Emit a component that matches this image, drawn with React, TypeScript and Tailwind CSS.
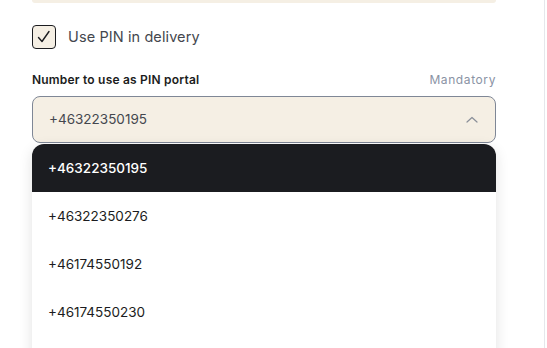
import React from 'react';

const numbers = ['+46322350195', '+46322350276', '+46174550192', '+46174550230'];

export default function App() {
  return (
    <div className="w-[547px] h-[348px] overflow-hidden bg-white flex" style={{ fontFamily: 'Inter, "Noto Sans", sans-serif' }}>
      <div className="w-[545px] shrink-0 border-r border-gray-200 pl-8 pr-12">
        {/* previous field bottom edge */}
        <div className="h-[3px] bg-[#f5efe4] rounded-b-lg" />

        <label className="flex items-center gap-3 mt-[22px]">
          <span className="w-6 h-6 rounded-[4px] border border-[#1b1c20] bg-[#f5efe4] flex items-center justify-center">
            <svg width="16" height="16" viewBox="0 0 16 16" fill="none">
              <path d="M2.5 8.5 L6 12.5 L13 2.5" stroke="#1b1c20" strokeWidth="1.4" strokeLinecap="round" strokeLinejoin="round" />
            </svg>
          </span>
          <span className="text-[14.5px] text-[#44474e] tracking-[0.1px]">Use PIN in delivery</span>
        </label>

        <div className="flex justify-between items-end mt-[22px]">
          <span className="text-[12px] font-semibold text-[#1b1c20] tracking-[0.2px]">Number to use as PIN portal</span>
          <span className="text-[12px] text-[#8a93a4] tracking-[0.6px]">Mandatory</span>
        </div>

        <div className="mt-[7px] h-[47px] rounded-lg border border-[#7f8796] bg-[#f5efe4] flex items-center justify-between pl-4 pr-4">
          <span className="text-[13.5px] text-[#44474e]">+46322350195</span>
          <svg width="14" height="10" viewBox="0 0 14 10" fill="none">
            <path d="M2 7 L7 2.5 L12 7" stroke="#8a8f99" strokeWidth="1.2" strokeLinecap="round" strokeLinejoin="round" />
          </svg>
        </div>

        <div className="mt-px rounded-t-xl overflow-hidden bg-white pb-6 shadow-[0_4px_14px_rgba(0,0,0,0.12)]">
          {numbers.map((n, i) => (
            <div
              key={n}
              className={
                i === 0
                  ? 'h-12 flex items-center px-4 bg-[#1b1c20] text-white text-[13.5px] font-medium'
                  : 'h-12 flex items-center px-4 text-[#1b1c20] text-[13.5px]'
              }
            >
              {n}
            </div>
          ))}
        </div>
      </div>
    </div>
  );
}
